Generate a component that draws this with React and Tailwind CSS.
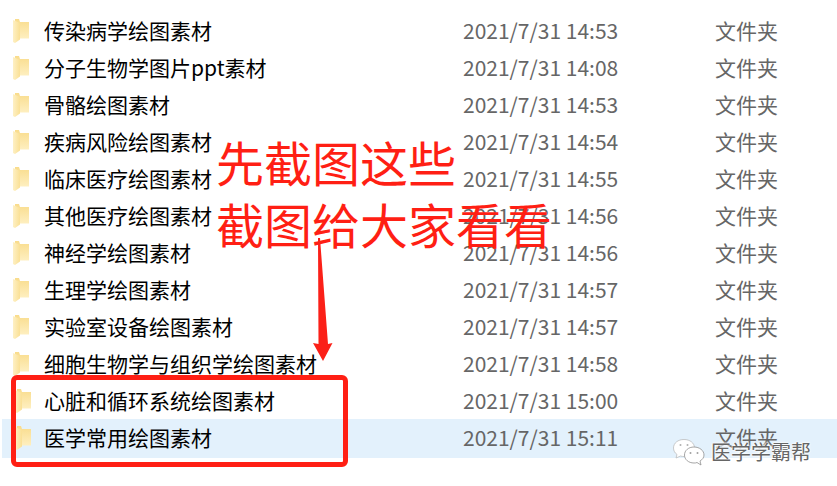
const rows = [
  ['传染病学绘图素材', '2021/7/31 14:53'],
  ['分子生物学图片ppt素材', '2021/7/31 14:08'],
  ['骨骼绘图素材', '2021/7/31 14:53'],
  ['疾病风险绘图素材', '2021/7/31 14:54'],
  ['临床医疗绘图素材', '2021/7/31 14:55'],
  ['其他医疗绘图素材', '2021/7/31 14:56'],
  ['神经学绘图素材', '2021/7/31 14:56'],
  ['生理学绘图素材', '2021/7/31 14:57'],
  ['实验室设备绘图素材', '2021/7/31 14:57'],
  ['细胞生物学与组织学绘图素材', '2021/7/31 14:58'],
  ['心脏和循环系统绘图素材', '2021/7/31 15:00'],
  ['医学常用绘图素材', '2021/7/31 15:11'],
];

const cjk = "font-['Microsoft_YaHei','Noto_Sans_CJK_SC','Noto_Sans',sans-serif]";

const Folder = () => (
  <svg width="16" height="24" viewBox="0 0 16 24" className="shrink-0">
    <defs>
      <linearGradient id="back" x1="0" y1="0" x2="0" y2="1">
        <stop offset="0" stopColor="#f9dc8c" />
        <stop offset="1" stopColor="#feefc0" />
      </linearGradient>
      <linearGradient id="leaf" x1="0" y1="0" x2="1" y2="0">
        <stop offset="0" stopColor="#fef0c4" />
        <stop offset="1" stopColor="#fae095" />
      </linearGradient>
    </defs>
    <path d="M2 0 L6 0 L7 3 L16 3 L16 19.5 L2 19.5 Z" fill="url(#back)" />
    <path d="M0 1 L7 4 L7 20.5 L2 24 L0 23 Z" fill="url(#leaf)" />
  </svg>
);

const App = () => {
  return (
    <div className={`relative w-[837px] h-[486px] overflow-hidden bg-white ${cjk}`}>
      <div className="flex flex-col pt-[12px]">
        {rows.map(([name, date], i) => (
          <div
            key={name}
            className={`flex items-center ml-[2px] ${i === 11 ? 'h-[39px] pb-[2px] bg-[#e3f1fc]' : 'h-[37px]'}`}
          >
            <div className={`w-[42px] flex ${i > 9 ? 'pl-[13px]' : 'pl-[11px]'}`}>
              <Folder />
            </div>
            <div className="w-[419px] text-[21px] text-black whitespace-nowrap">{name}</div>
            <div className="w-[252px] text-[21px] text-[#666666] whitespace-nowrap">{date}</div>
            <div className="text-[21px] text-[#666666] whitespace-nowrap">文件夹</div>
          </div>
        ))}
      </div>

      {/* red annotation */}
      <div className="absolute left-[216px] top-[130px] text-[48px] leading-[62px] text-[#ff1f14] whitespace-nowrap">
        <div>先截图这些</div>
        <div>截图给大家看看</div>
      </div>
      <svg className="absolute left-[310px] top-[238px]" width="26" height="126" viewBox="0 0 26 126">
        <path d="M8 0 L10 0 L18 106 L22.5 105 L13 123 L3 105 L8.5 106 Z" fill="#fb2018" />
      </svg>
      <div className="absolute left-[11px] top-[375px] w-[337px] h-[92px] rounded-[6px] border-[5px] border-[#ff1f14]" />

      {/* watermark */}
      <div className="absolute left-[673px] top-[437px] flex items-center gap-[6px]">
        <svg width="32" height="27" viewBox="0 0 32 27">
          <path d="M11 0.5 C5 0.5 0.5 4 0.5 9 C0.5 12 2 14 4 15.5 L3 19 L7.5 17 C9 17.5 10 17.5 11 17.5 C17 17.5 21.5 14 21.5 9 C21.5 4 17 0.5 11 0.5 Z" fill="#fff" stroke="#b5b5b5" strokeWidth="0.7" />
          <path d="M21 8 C15.5 8 11.5 11.5 11.5 16 C11.5 20.5 15.5 24 21 24 C22 24 23 24 24 23.5 L28 26 L27 22 C29.5 20.5 31 18.5 31 16 C31 11.5 26.5 8 21 8 Z" fill="#fff" stroke="#8f8f8f" strokeWidth="0.8" />
          <circle cx="7.5" cy="6" r="1" fill="#b0b0b0" />
          <circle cx="14.5" cy="6" r="1" fill="#b0b0b0" />
          <circle cx="17.5" cy="14" r="1" fill="#a0a0a0" />
          <circle cx="24.5" cy="14" r="1" fill="#a0a0a0" />
        </svg>
        <span className="text-[20px] text-[#666666] whitespace-nowrap [text-shadow:0_0_2px_#fff,0_0_2px_#fff,0_0_3px_#fff]">医学学霸帮</span>
      </div>
    </div>
  );
};

export default App;
